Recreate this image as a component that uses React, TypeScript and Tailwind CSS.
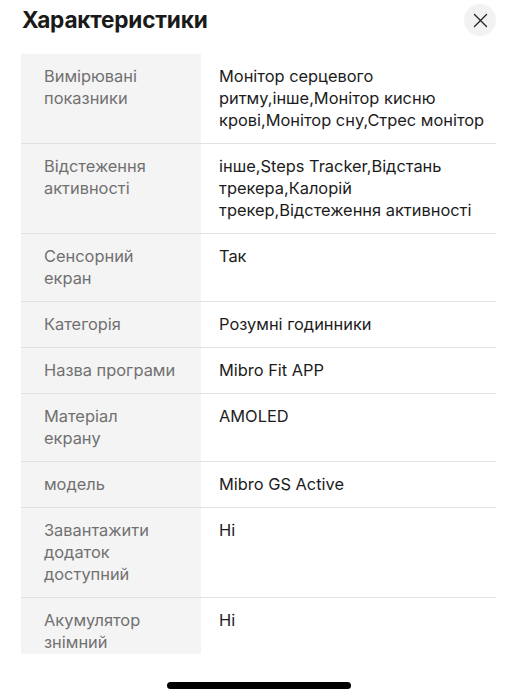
const rows: [string, string][] = [
  ["Вимірювані показники", "Монітор серцевого ритму,інше,Монітор кисню крові,Монітор сну,Стрес монітор"],
  ["Відстеження активності", "інше,Steps Tracker,Відстань трекера,Калорій трекер,Відстеження активності"],
  ["Сенсорний екран", "Так"],
  ["Категорія", "Розумні годинники"],
  ["Назва програми", "Mibro Fit APP"],
  ["Матеріал екрану", "AMOLED"],
  ["модель", "Mibro GS Active"],
  ["Завантажити додаток доступний", "Ні"],
  ["Акумулятор знімний", "Ні"],
];

export default function App() {
  return (
    <div className="relative h-[700px] w-[517px] overflow-hidden bg-white font-['Inter',sans-serif]">
      <div className="flex h-[38px] items-center justify-between pl-[22px] pr-[21px] pt-[2px]">
        <h1 className="text-[22.6px] font-bold tracking-[-0.2px] text-[#1a1a1a]">Характеристики</h1>
        <button className="flex h-8 w-8 items-center justify-center rounded-full bg-[#f2f2f2]">
          <svg width="15" height="15" viewBox="0 0 15 15" fill="none" stroke="#222" strokeWidth="1.3" strokeLinecap="round">
            <path d="M1.5 1.5l12 12M13.5 1.5l-12 12" />
          </svg>
        </button>
      </div>
      <div className="ml-[21px] mr-[21px] mt-[16px] h-[600px] overflow-hidden">
        {rows.map(([label, value], i) => (
          <div
            key={label}
            className={`flex text-[16.4px] leading-[22px] ${i < rows.length - 1 ? "border-b border-[#e2e2e2]" : ""}`}
          >
            <div className="w-[180px] shrink-0 bg-[#f4f4f4] pb-[12px] pl-[23px] pr-[24px] pt-[11px] text-[#707070]">
              {label}
            </div>
            <div className="flex-1 pb-[12px] pl-[18px] pr-1 pt-[11px] text-[#1c1c1c]">{value}</div>
          </div>
        ))}
      </div>
      <div className="absolute bottom-[11px] left-[167px] h-[7px] w-[184px] rounded-full bg-black" />
    </div>
  );
}
